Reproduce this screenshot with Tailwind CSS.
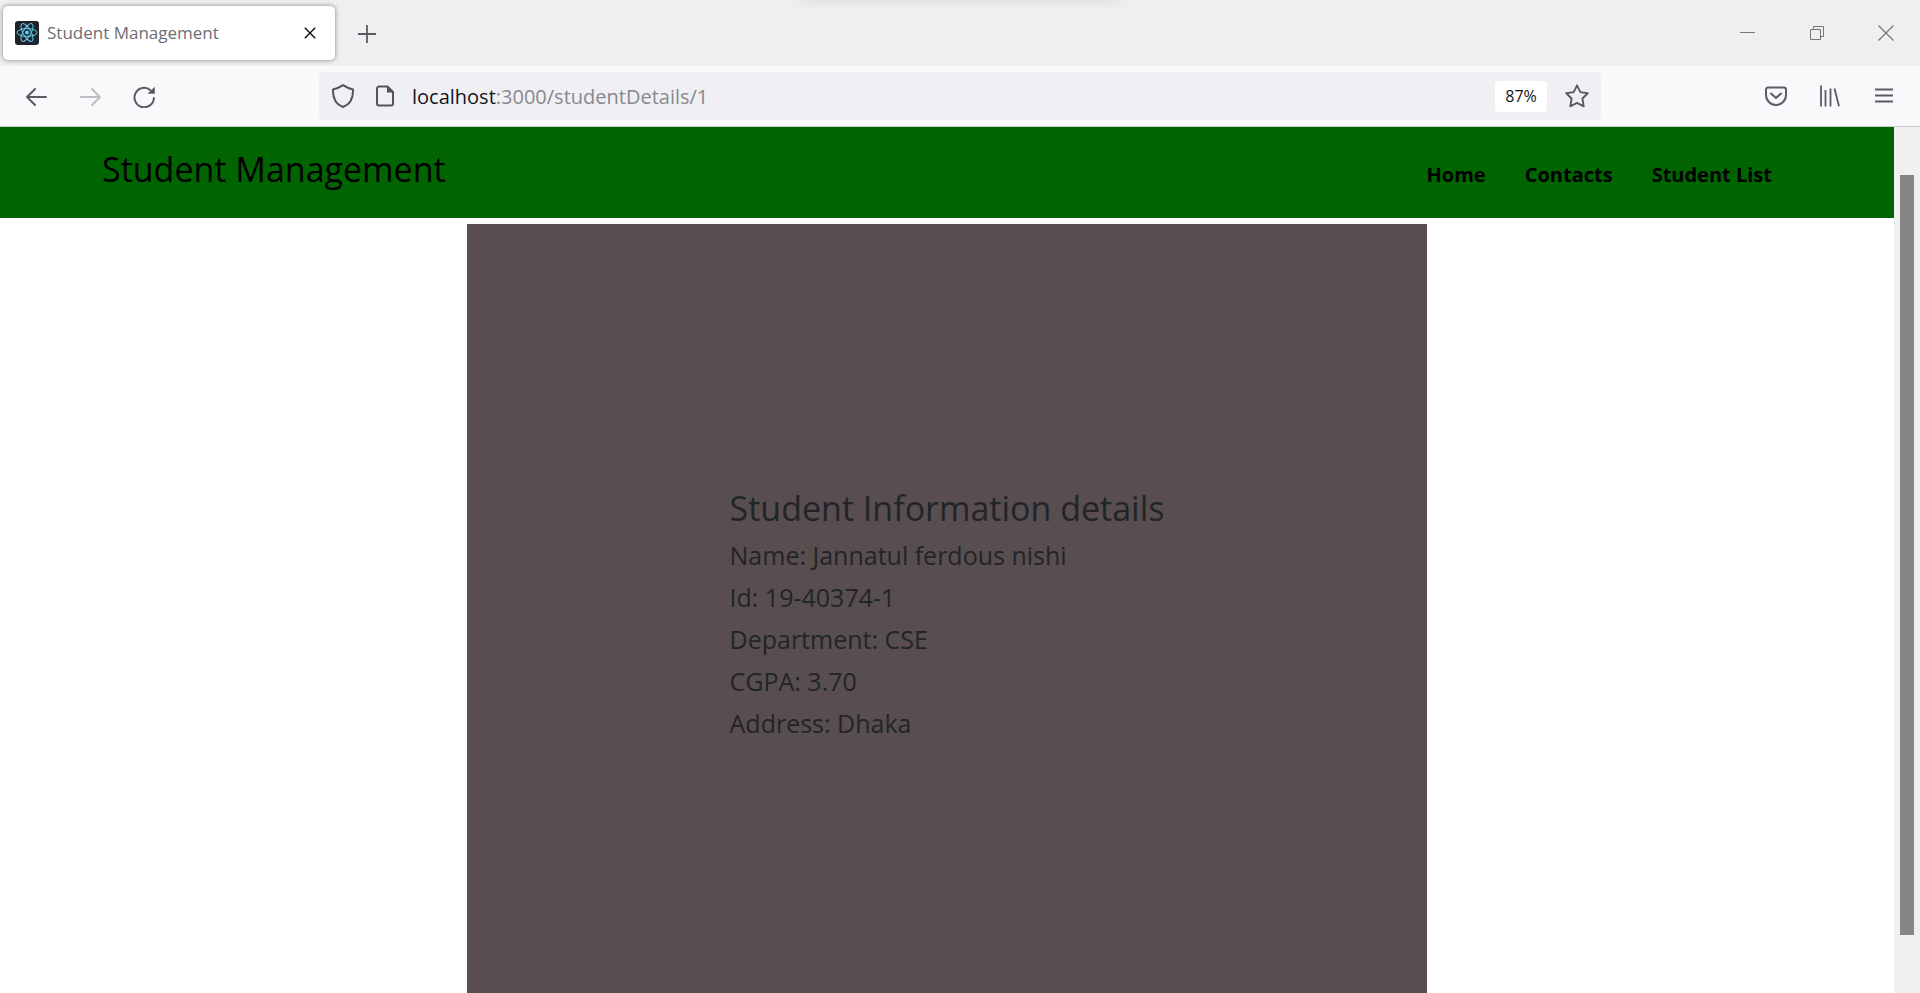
<!DOCTYPE html>
<html lang="en">
<head>
<meta charset="utf-8">
<title>Student Management</title>
<script src="https://cdn.jsdelivr.net/npm/@tailwindcss/browser@4"></script>
</head>
<body class="flex h-screen flex-col overflow-hidden bg-white font-['Open_Sans','Noto_Sans',sans-serif]">

<!-- Tab strip -->
<div class="relative flex h-[66px] shrink-0 items-center bg-[#efefef] pl-[3px] text-[#5b5b66]">
  <div class="absolute -top-2 left-[800px] h-2 w-[320px] shadow-[0_0_12px_rgba(0,0,0,0.10)]"></div>
  <div class="flex h-[54px] w-[332px] items-center rounded-[5px] bg-white pl-3 pr-[15px] shadow-[0_0_5px_rgba(0,0,0,0.45)]">
    <svg class="size-6 shrink-0" viewBox="0 0 24 24" fill="none" stroke="#5ccfee" stroke-width="1">
      <rect width="24" height="24" rx="3" fill="#20232a" stroke="none"/>
      <ellipse cx="12" cy="11.500" rx="10" ry="3.900"/>
      <ellipse cx="12" cy="11.500" rx="10" ry="3.900" transform="rotate(60 12 11.500)"/>
      <ellipse cx="12" cy="11.500" rx="10" ry="3.900" transform="rotate(120 12 11.500)"/>
      <circle cx="12" cy="11.500" r="2" fill="#5ccfee" stroke="none"/>
    </svg>
    <span class="ml-2 flex-1 whitespace-nowrap text-[17px] text-[#6e6e76]">Student Management</span>
    <button aria-label="Close tab" class="grid size-5 place-items-center text-black">
      <svg class="size-3" viewBox="0 0 12 12" fill="none" stroke="currentColor" stroke-width="1.300"><path d="M.8.8l10.400 10.400M11.200.8L.8 11.200"/></svg>
    </button>
  </div>
  <button aria-label="New tab" class="ml-[22px] mt-0.5 grid size-5 place-items-center">
    <svg class="size-[18px]" viewBox="0 0 18 18" fill="none" stroke="currentColor" stroke-width="1.800"><path d="M9 0v18M0 9h18"/></svg>
  </button>
  <div class="ml-auto flex h-full items-center text-[#777]">
    <button aria-label="Minimize" class="grid h-full w-[69px] place-items-center">
      <svg class="size-[15px]" viewBox="0 0 15 15" stroke="currentColor"><path d="M0 6.500h15"/></svg>
    </button>
    <button aria-label="Restore" class="grid h-full w-[69px] place-items-center">
      <svg class="size-[14px]" viewBox="0 0 14 14" fill="none" stroke="currentColor"><path d="M.5 3.500h10v10H.5zM3.500 3.500v-3h10v10h-3"/></svg>
    </button>
    <button aria-label="Close" class="grid h-full w-[69px] place-items-center">
      <svg class="size-4" viewBox="0 0 16 16" stroke="currentColor" stroke-width="1.300"><path d="M.5.5l15 15M15.500.5l-15 15"/></svg>
    </button>
  </div>
</div>

<!-- Navigation toolbar -->
<div class="flex h-[61px] shrink-0 items-center border-b border-[#ccccd0] bg-[#f9f9fb] pl-6 pr-[25px] text-[#5b5b66]">
  <div class="flex w-[295px] items-center gap-[30px] pt-0.5">
    <button aria-label="Back" class="grid size-6 place-items-center">
      <svg class="h-[18px] w-[21px]" viewBox="0 0 21 18" fill="none" stroke="currentColor" stroke-width="2" stroke-linecap="round" stroke-linejoin="round"><path d="M20 9H1M9 1L1 9l8 8"/></svg>
    </button>
    <button aria-label="Forward" disabled class="grid size-6 place-items-center text-[#bdbdc2]">
      <svg class="h-[18px] w-[21px]" viewBox="0 0 21 18" fill="none" stroke="currentColor" stroke-width="2" stroke-linecap="round" stroke-linejoin="round"><path d="M1 9h19M12 1l8 8-8 8"/></svg>
    </button>
    <button aria-label="Reload" class="grid size-6 place-items-center">
      <svg class="size-[22px]" viewBox="0 0 22 22" fill="none" stroke="currentColor" stroke-width="2" stroke-linecap="round"><path d="M17.500 4.200A9.700 9.700 0 1 0 20.900 12"/><path d="M21.800.8v7h-7.300z" fill="currentColor" stroke="none"/></svg>
    </button>
  </div>
  <div class="flex h-12 w-[1282px] min-w-0 items-center rounded-[5px] bg-[#f0f0f4] px-3">
    <svg class="size-6 shrink-0" viewBox="0 0 24 24" fill="none" stroke="#52525e" stroke-width="2" stroke-linejoin="round"><path d="M12 1.200c3 2 6.200 3.500 10 4.200.3 7.800-2.200 14.600-10 17.600C4.200 20 1.700 13.200 2 5.400 5.800 4.700 9 3.200 12 1.200z"/></svg>
    <svg class="ml-[21px] h-[22px] w-[18px] shrink-0" viewBox="0 0 18 22" fill="none" stroke="#52525e" stroke-width="2" stroke-linejoin="round"><path d="M3 1.500h8.500L17 7v11.500a2 2 0 0 1-2 2H3a2 2 0 0 1-2-2v-15a2 2 0 0 1 2-2z"/><path d="M11 1v6.500h6.500z" fill="#52525e" stroke="none"/></svg>
    <div class="ml-[18px] flex min-w-0 flex-1 items-center pt-0.5 text-[20px]">
      <label for="url" class="text-[#15141a]">localhost</label>
      <input id="url" type="text" value=":3000/studentDetails/1" class="min-w-0 flex-1 bg-transparent text-[#88888d] outline-none">
    </div>
    <button class="h-[31px] w-[52px] shrink-0 rounded-[4px] bg-white text-[16px] leading-none text-[#15141a]">87%</button>
    <button aria-label="Bookmark this page" class="ml-[18px] shrink-0">
      <svg class="size-6" viewBox="0 0 24 24" fill="none" stroke="currentColor" stroke-width="1.900" stroke-linejoin="round"><path d="M12 1.300l3.300 6.800 7.500 1.100-5.400 5.300 1.300 7.800L12 18.800l-6.700 3.500 1.300-7.800L1.200 9.200l7.500-1.100z"/></svg>
    </button>
  </div>
  <div class="ml-auto flex items-center gap-[33px]">
    <button aria-label="Save to Pocket" class="grid h-6 w-[22px] place-items-center">
      <svg class="h-5 w-[22px]" viewBox="0 0 22 20" fill="none" stroke="currentColor" stroke-width="2" stroke-linecap="round" stroke-linejoin="round"><path d="M3 1.500h16a2 2 0 0 1 2 2V9a10 10 0 0 1-20 0V3.500a2 2 0 0 1 2-2z"/><path d="M6 7.500l5 4.500 5-4.500"/></svg>
    </button>
    <button aria-label="Library" class="grid h-6 w-5 place-items-center">
      <svg class="h-[22px] w-5" viewBox="0 0 20 22" fill="none" stroke="currentColor" stroke-width="1.800"><path d="M1 .5v21M5.500 5v16.500M10.500 3.500v18M14.500 3.500L19 21.300"/></svg>
    </button>
    <button aria-label="Open application menu" class="grid h-6 w-[22px] place-items-center">
      <svg class="h-4 w-[18px]" viewBox="0 0 18 16" stroke="currentColor" stroke-width="2"><path d="M0 1.500h18M0 7.500h18M0 13.500h18"/></svg>
    </button>
  </div>
</div>

<!-- Page viewport -->
<div class="flex min-h-0 flex-1">
  <div class="flex min-w-0 flex-1 flex-col">
    <header class="flex h-[91px] shrink-0 items-center justify-between bg-[#006400] pl-[102px] pr-[122px] text-black">
      <h1 class="pb-1.5 text-[34px]">Student Management</h1>
      <nav class="flex gap-[39px] pt-1 text-[20px] font-bold">
        <a href="#">Home</a>
        <a href="#">Contacts</a>
        <a href="#">Student List</a>
      </nav>
    </header>
    <main class="mx-auto mt-1.5 flex w-full max-w-[960px] flex-1 items-center justify-center bg-[#584d4f] pt-3 text-[#212529]">
      <div>
        <h2 class="mb-1 text-[34px] leading-[44px]">Student Information details</h2>
        <div class="text-[25px] leading-[42px]">
          <p>Name: Jannatul ferdous nishi</p>
          <p>Id: 19-40374-1</p>
          <p>Department: CSE</p>
          <p>CGPA: 3.70</p>
          <p>Address: Dhaka</p>
        </div>
      </div>
    </main>
  </div>
  <!-- Scrollbar -->
  <div class="flex w-[26px] shrink-0 flex-col bg-[#f0f0f0] px-1.5 pb-[58px] pt-12">
    <div class="flex-1 bg-[#858585]"></div>
  </div>
</div>
</body>
</html>
